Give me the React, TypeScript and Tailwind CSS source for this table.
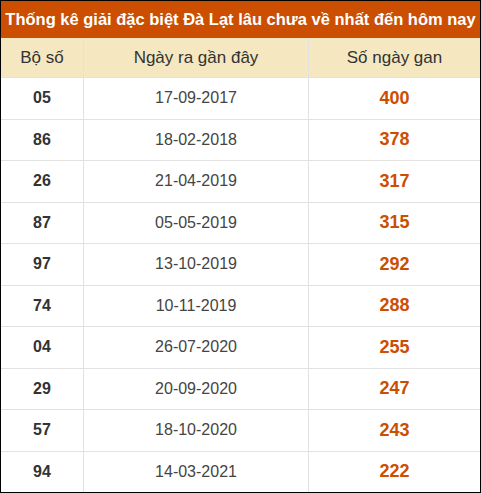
const rows = [
  { so: "05", date: "17-09-2017", gan: 400 },
  { so: "86", date: "18-02-2018", gan: 378 },
  { so: "26", date: "21-04-2019", gan: 317 },
  { so: "87", date: "05-05-2019", gan: 315 },
  { so: "97", date: "13-10-2019", gan: 292 },
  { so: "74", date: "10-11-2019", gan: 288 },
  { so: "04", date: "26-07-2020", gan: 255 },
  { so: "29", date: "20-09-2020", gan: 247 },
  { so: "57", date: "18-10-2020", gan: 243 },
  { so: "94", date: "14-03-2021", gan: 222 },
];

export default function App() {
  return (
    <div
      className="w-[481px] h-[493px] border border-black bg-white"
      style={{ fontFamily: '"Liberation Sans", Arial, sans-serif' }}
    >
      {/* Title */}
      <div className="h-[37px] bg-[#cc4e00] flex items-center justify-center text-white font-bold text-[16.5px]">
        Thống kê giải đặc biệt Đà Lạt lâu chưa về nhất đến hôm nay
      </div>

      {/* Header */}
      <div className="grid grid-cols-[82px_225px_1fr] h-[39px] bg-[#f5e7bf] text-[17px] text-[#333]">
        <div className="flex items-center justify-center">Bộ số</div>
        <div className="flex items-center justify-center border-l border-[#e2e2e2]">Ngày ra gần đây</div>
        <div className="flex items-center justify-center border-l border-[#e2e2e2]">Số ngày gan</div>
      </div>

      {/* Rows */}
      {rows.map((r) => (
        <div
          key={r.so}
          className="grid grid-cols-[82px_225px_1fr] h-[41.5px] border-t border-[#e2e2e2] text-[16px]"
        >
          <div className="flex items-center justify-center font-bold text-[#333]">{r.so}</div>
          <div className="flex items-center justify-center border-l border-[#e2e2e2] text-[#444]">{r.date}</div>
          <div className="flex items-center justify-center border-l border-[#e2e2e2] font-bold text-[18px] text-[#cc4e00]">
            {r.gan}
          </div>
        </div>
      ))}
    </div>
  );
}
